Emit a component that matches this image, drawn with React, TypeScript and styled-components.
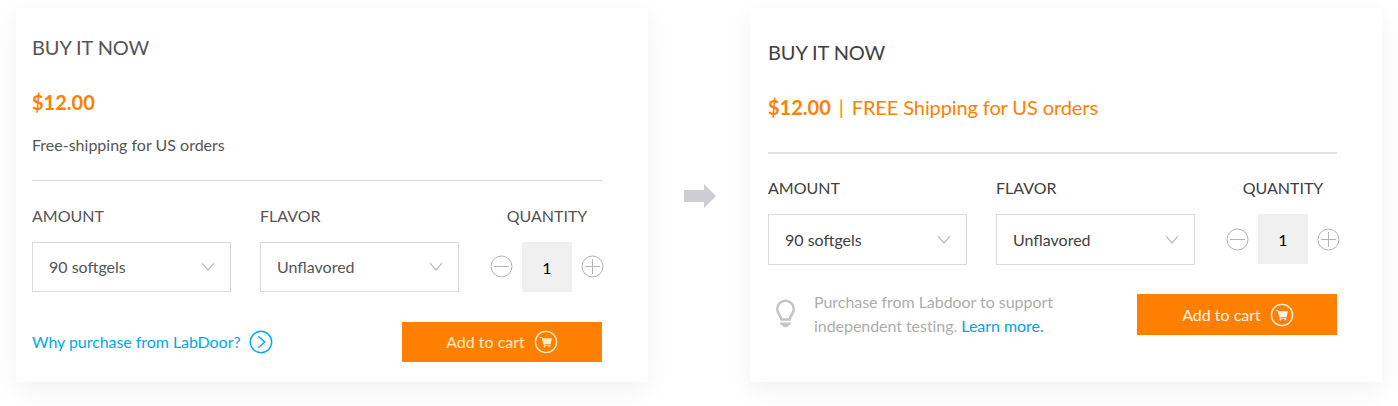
import React from "react";
import styled, { createGlobalStyle } from "styled-components";

const GlobalStyle = createGlobalStyle`
  * { box-sizing: border-box; }
  body {
    margin: 0;
    background: #fff;
    font-family: Lato, "Liberation Sans", sans-serif;
    overflow: hidden;
  }
`;

const Page = styled.main`
  display: flex;
  align-items: flex-start;
  width: 1398px;
  height: 406px;
  padding: 8px 16px 0;
`;

const Card = styled.section<{ $top: number; $side: number; $ink: string }>`
  width: 632px;
  height: 374px;
  padding: ${(p) => p.$top}px 0 0 ${(p) => p.$side}px;
  background: #fff;
  color: ${(p) => p.$ink};
  box-shadow: 0 8px 24px rgba(0, 0, 0, 0.06);
`;

const Content = styled.div<{ $width: number }>`
  width: ${(p) => p.$width}px;
`;

const Between = styled.div`
  width: 102px;
  padding: 176px 0 0 36px;
  svg { display: block; }
`;

const Title = styled.h2`
  margin: 0;
  font-size: 20px;
  line-height: 24px;
  font-weight: 400;
  letter-spacing: -0.1px;
`;

const Price = styled.div`
  display: flex;
  margin-top: 31px;
  font-size: 20px;
  line-height: 24px;
  color: #ff8000;
`;

const Amount = styled.strong`
  font-weight: 700;
`;

const Separator = styled.span`
  width: 21px;
  text-align: center;
`;

const Offer = styled.span`
  letter-spacing: -0.11px;
`;

const Shipping = styled.p`
  margin: 21px 0 0;
  font-size: 16px;
  line-height: 20px;
`;

const Divider = styled.hr<{ $gap: number; $soft?: boolean }>`
  height: ${(p) => (p.$soft ? 2 : 1)}px;
  margin: ${(p) => p.$gap}px 0 ${(p) => (p.$soft ? -1 : 0)}px;
  border: 0;
  background: ${(p) => (p.$soft ? "#e2e2e2" : "#d6d6d6")};
`;

const Fields = styled.div`
  display: flex;
  margin-top: 25px;
`;

const Field = styled.div`
  flex: none;
  width: 199px;
  margin-right: 29px;
`;

const QuantityField = styled.div`
  flex: none;
  width: 114px;
  margin-left: 2px;
`;

const Label = styled.div<{ $center?: boolean }>`
  margin-bottom: 16px;
  font-size: 16px;
  line-height: 20px;
  text-align: ${(p) => (p.$center ? "center" : "left")};
`;

const SelectBox = styled.div<{ $low?: boolean }>`
  display: flex;
  align-items: center;
  justify-content: space-between;
  height: ${(p) => (p.$low ? 51 : 50)}px;
  padding: 0 15px 0 16px;
  border: 1px solid #d9d9d9;
  font-size: 16px;
  line-height: 20px;
`;

const Stepper = styled.div<{ $low?: boolean }>`
  display: flex;
  align-items: center;
  justify-content: space-between;
  svg { display: block; margin-bottom: ${(p) => (p.$low ? 0 : 1)}px; }
`;

const Count = styled.div`
  width: 50px;
  height: 50px;
  padding-top: 1px;
  background: #f0f0f0;
  color: #000;
  font-size: 16px;
  line-height: 50px;
  text-align: center;
`;

const Footer = styled.div<{ $gap: number }>`
  display: flex;
  align-items: center;
  justify-content: space-between;
  height: 40px;
  margin-top: ${(p) => p.$gap}px;
`;

const CartButton = styled.button<{ $ink: string; $low?: boolean }>`
  display: flex;
  align-items: center;
  justify-content: center;
  gap: 9px;
  width: 200px;
  height: ${(p) => (p.$low ? 41 : 40)}px;
  padding: ${(p) => (p.$low ? "1px 0 0 2px" : "0")};
  border: 0;
  background: #ff8000;
  color: ${(p) => p.$ink};
  font: 400 16px/20px Lato, "Liberation Sans", sans-serif;
`;

const WhyLink = styled.a`
  display: flex;
  align-items: center;
  gap: 8px;
  color: #00a8f0;
  font-size: 16px;
  line-height: 20px;
  letter-spacing: -0.06px;
`;

const Note = styled.div`
  display: flex;
  align-items: center;
  padding-left: 7px;
  gap: 17px;
`;

const NoteText = styled.p`
  margin: 0;
  font-size: 16px;
  line-height: 24px;
  letter-spacing: -0.05px;
  color: #adadad;
`;

const LearnMore = styled.a`
  color: #00a2ea;
`;

const Chevron = () => (
  <svg width="14" height="10" viewBox="0 0 14 10" fill="none" stroke="#bdbdbd" strokeWidth="1.2">
    <path d="M1 1.2 7 8l6-6.8" />
  </svg>
);

const StepIcon = ({ plus = false }: { plus?: boolean }) => (
  <svg width="23" height="23" viewBox="0 0 23 23" fill="none" stroke="#b3b3b3">
    <circle cx="11.5" cy="11.5" r="10.5" />
    <path d={plus ? "M4 11.5h15M11.5 4v15" : "M4 11.5h15"} />
  </svg>
);

const CartIcon = () => (
  <svg width="24" height="24" viewBox="0 0 24 24" fill="none">
    <circle cx="12" cy="12" r="10.6" stroke="currentColor" strokeWidth="1.4" />
    <path d="M5.8 7.5H8l2.2 7.7h6.4" stroke="currentColor" strokeWidth="1" />
    <path d="M8 8.2h9.9L16.600 14H9.800z" fill="currentColor" />
    <circle cx="10.5" cy="16.6" r="0.9" fill="currentColor" />
    <circle cx="15.3" cy="16.6" r="0.9" fill="currentColor" />
  </svg>
);

const CircleArrow = () => (
  <svg width="24" height="24" viewBox="0 0 24 24" fill="none" stroke="currentColor" strokeWidth="1.4">
    <circle cx="12" cy="12" r="10.7" />
    <path d="m9.2 6.3 6.6 5.7-6.6 5.7" />
  </svg>
);

const Bulb = () => (
  <svg width="22" height="30" viewBox="0 0 22 30" fill="none">
    <path
      d="M6.4 20.6C6 16.600 2.200 14.800 2.200 10a8.300 8.300 0 0 1 16.600 0c0 4.800-3.800 6.600-4.200 10.600z"
      stroke="#c4c4c4"
      strokeWidth="2.5"
    />
    <path d="M5.300 23.400h10.400v1.200c0 1-1 1.600-2 1.800-.4 1.100-1.600 1.800-3.200 1.800s-2.800-.7-3.200-1.800c-1-.2-2-.8-2-1.800z" fill="#c4c4c4" />
  </svg>
);

const Options = ({ low = false }: { low?: boolean }) => (
  <Fields>
    <Field>
      <Label>AMOUNT</Label>
      <SelectBox $low={low}>90 softgels<Chevron /></SelectBox>
    </Field>
    <Field>
      <Label>FLAVOR</Label>
      <SelectBox $low={low}>Unflavored<Chevron /></SelectBox>
    </Field>
    <QuantityField>
      <Label $center>QUANTITY</Label>
      <Stepper $low={low}>
        <StepIcon />
        <Count>1</Count>
        <StepIcon plus />
      </Stepper>
    </QuantityField>
  </Fields>
);

export default function App() {
  return (
    <>
      <GlobalStyle />
      <Page>
        <Card $top={27} $side={16} $ink="#555">
          <Content $width={570}>
            <Title>BUY IT NOW</Title>
            <Price><Amount>$12.00</Amount></Price>
            <Shipping>Free-shipping for US orders</Shipping>
            <Divider $gap={25} />
            <Options />
            <Footer $gap={30}>
              <WhyLink>Why purchase from LabDoor?<CircleArrow /></WhyLink>
              <CartButton $ink="#ffecc8">Add to cart<CartIcon /></CartButton>
            </Footer>
          </Content>
        </Card>
        <Between>
          <svg width="32" height="24" viewBox="0 0 32 24">
            <path d="M0 6h20V0l12 12-12 12v-6H0z" fill="#cdced3" />
          </svg>
        </Between>
        <Card $top={32} $side={18} $ink="#404040">
          <Content $width={569}>
            <Title>BUY IT NOW</Title>
            <Price>
              <Amount>$12.00</Amount>
              <Separator>|</Separator>
              <Offer>FREE Shipping for US orders</Offer>
            </Price>
            <Divider $gap={33} $soft />
            <Options low />
            <Footer $gap={29}>
              <Note>
                <Bulb />
                <NoteText>
                  Purchase from Labdoor to support<br />
                  independent testing. <LearnMore>Learn more.</LearnMore>
                </NoteText>
              </Note>
              <CartButton $ink="#fff5e8" $low>Add to cart<CartIcon /></CartButton>
            </Footer>
          </Content>
        </Card>
      </Page>
    </>
  );
}
